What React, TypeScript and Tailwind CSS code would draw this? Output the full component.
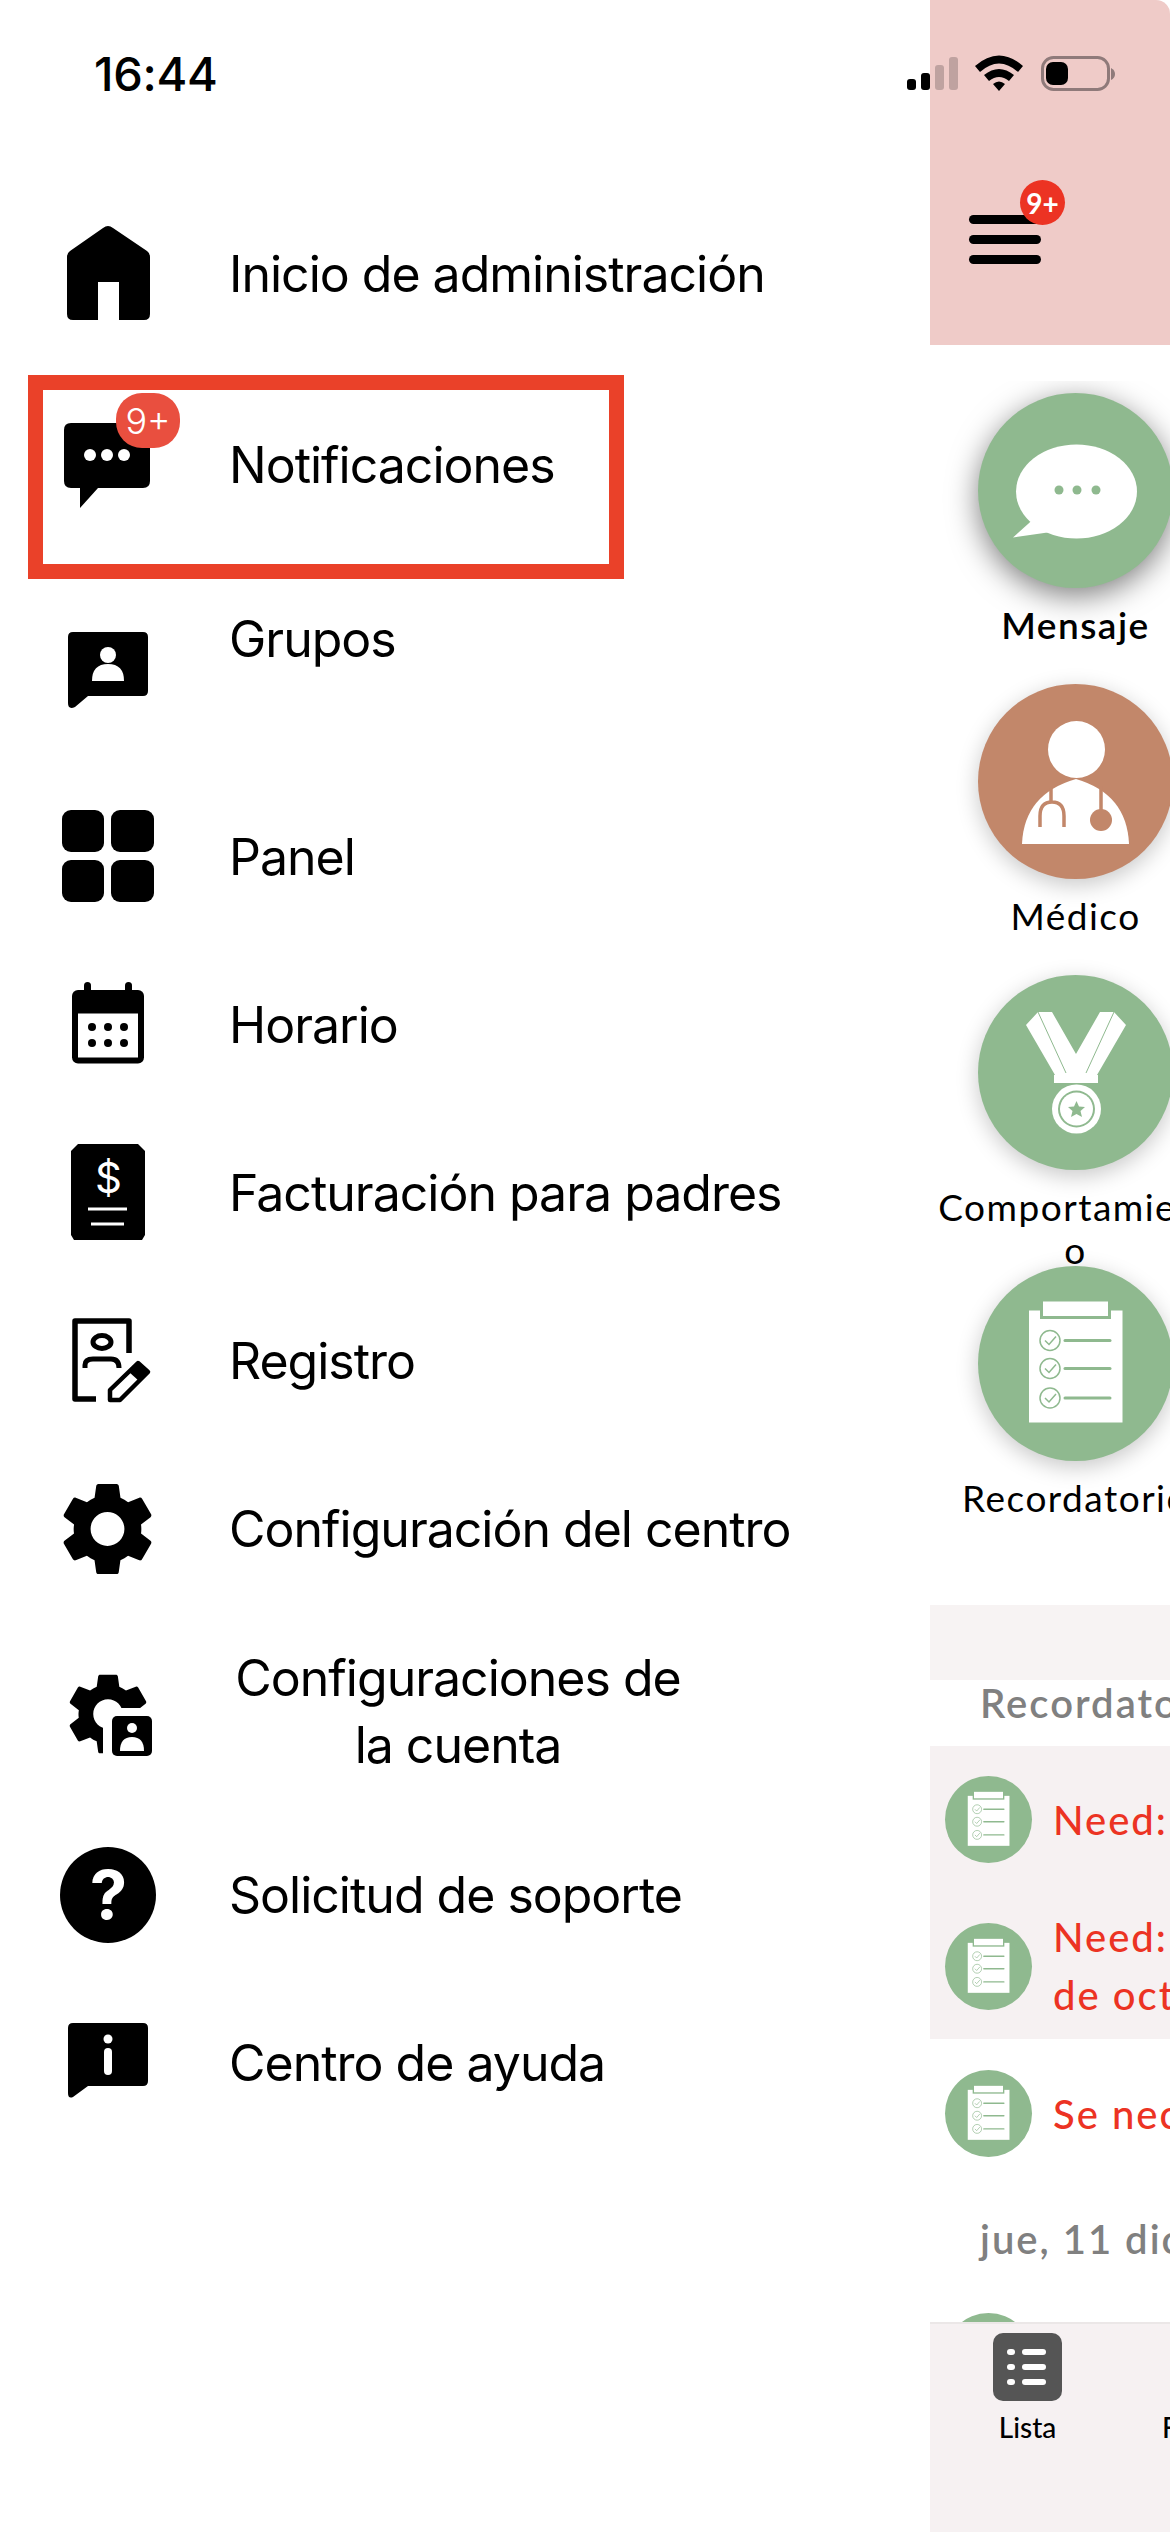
import type { ReactNode } from "react";

const GEAR =
  "M19.14 12.94c.04-.3.06-.61.06-.94 0-.32-.02-.64-.07-.94l2.03-1.58c.18-.14.23-.41.12-.61l-1.92-3.32c-.12-.22-.37-.29-.59-.22l-2.39.96c-.5-.38-1.03-.7-1.62-.94l-.36-2.54c-.04-.24-.24-.41-.48-.41h-3.84c-.24 0-.43.17-.47.41l-.36 2.54c-.59.24-1.13.57-1.62.94l-2.39-.96c-.22-.08-.47 0-.59.22L2.74 8.87c-.12.21-.08.47.12.61l2.03 1.58c-.05.3-.09.63-.09.94s.02.64.07.94l-2.03 1.58c-.18.14-.23.41-.12.61l1.92 3.32c.12.22.37.29.59.22l2.39-.96c.5.38 1.03.7 1.62.94l.36 2.54c.05.24.24.41.48.41h3.84c.24 0 .44-.17.47-.41l.36-2.54c.59-.24 1.13-.56 1.62-.94l2.39.96c.22.08.47 0 .59-.22l1.92-3.32c.12-.22.07-.47-.12-.61l-2.01-1.58zM12 15.6c-1.98 0-3.6-1.62-3.6-3.6s1.62-3.6 3.6-3.6 3.6 1.62 3.6 3.6-1.62 3.6-3.6 3.6z";

const Icon = ({ children }: { children: ReactNode }) => (
  <svg viewBox="0 0 100 100" className="w-[100px] h-[100px] shrink-0 overflow-visible">
    {children}
  </svg>
);

const HomeIcon = () => (
  <Icon>
    <path d="M45 4Q50 0 55 4L89 27Q92 29 92 33V90Q92 96 86 96H61V58H40V96H15Q9 96 9 90V33Q9 29 12 27Z" />
  </Icon>
);

const ChatIcon = () => (
  <Icon>
    <path d="M13 8H85Q92 8 92 15V66Q92 73 85 73H40L22 93V73H13Q6 73 6 66V15Q6 8 13 8Z" />
    <circle cx="32" cy="40" r="6" fill="#fff" />
    <circle cx="49" cy="40" r="6" fill="#fff" />
    <circle cx="66" cy="40" r="6" fill="#fff" />
  </Icon>
);

const GroupIcon = () => (
  <Icon>
    <path d="M15 12H85Q90 12 90 17V71Q90 76 85 76H30L17 87Q10 90 10 83V17Q10 12 15 12Z" />
    <circle cx="50" cy="35" r="8" fill="#fff" />
    <path d="M34 61Q34 44 50 44Q66 44 66 61Z" fill="#fff" />
  </Icon>
);

const PanelIcon = () => (
  <Icon>
    <rect x="4" y="3" width="42" height="42" rx="9" />
    <rect x="53" y="3" width="43" height="42" rx="9" />
    <rect x="4" y="53" width="42" height="42" rx="9" />
    <rect x="53" y="53" width="43" height="42" rx="9" />
  </Icon>
);

const CalendarIcon = () => (
  <Icon>
    <rect x="26" y="7" width="7" height="14" rx="3.5" />
    <rect x="67" y="7" width="7" height="14" rx="3.5" />
    <rect x="14" y="15" width="72" height="73.5" rx="6" />
    <rect x="20" y="38.5" width="60" height="44" fill="#fff" />
    {[34, 50, 66].map((x) => (
      <g key={x}>
        <circle cx={x} cy="52" r="4" />
        <circle cx={x} cy="68" r="4" />
      </g>
    ))}
  </Icon>
);

const BillIcon = () => (
  <Icon>
    <path d="M20 1H80L87 8V92L84 97H16L13 92V8Z" />
    <text x="50" y="50" textAnchor="middle" fontSize="42" fill="#fff" fontFamily="Inter, sans-serif">
      $
    </text>
    <rect x="30" y="64.5" width="39" height="3" fill="#fff" />
    <rect x="33" y="79.5" width="33" height="3" fill="#fff" />
  </Icon>
);

const RegisterIcon = () => (
  <Icon>
    <g fill="none" stroke="#000" strokeWidth="5.5" strokeLinejoin="round">
      <path d="M71 42V10H17V88H38" />
      <ellipse cx="44" cy="31" rx="9" ry="6.5" strokeWidth="5" />
      <path d="M27 57V54Q27 48 35 48H53Q61 48 61 57" strokeWidth="5" />
      <path d="M52 89V79L80 52L90 61L62 89Z" strokeWidth="4.5" />
    </g>
    <path d="M71 61L80 52L90 61L81 70Z" />
  </Icon>
);

const GearIcon = () => (
  <Icon>
    <path transform="translate(49.5 50) scale(4.7) translate(-12 -12)" d={GEAR} />
  </Icon>
);

const AccountGearIcon = () => (
  <Icon>
    <path transform="translate(50 52) scale(4.1) translate(-12 -12)" d={GEAR} />
    <rect x="45" y="46" width="55" height="55" fill="#fff" />
    <rect x="54" y="54" width="40" height="40" rx="5" />
    <circle cx="74" cy="66" r="5" fill="#fff" />
    <path d="M62 89Q62 75 74 75Q86 75 86 89Z" fill="#fff" />
  </Icon>
);

const HelpIcon = () => (
  <Icon>
    <circle cx="50" cy="50" r="48" />
    <text x="50" y="74" textAnchor="middle" fontSize="67" fontWeight="700" fill="#fff" fontFamily="Inter, sans-serif">
      ?
    </text>
  </Icon>
);

const InfoIcon = () => (
  <Icon>
    <path d="M15 10H85Q90 10 90 15V68Q90 73 85 73H30L15 84Q10 86 10 80V15Q10 10 15 10Z" />
    <circle cx="50" cy="26" r="4.5" fill="#fff" />
    <rect x="46" y="35" width="8" height="27" rx="4" fill="#fff" />
  </Icon>
);

const menu = [
  { label: "Inicio de administración", icon: <HomeIcon />, height: "h-[192px]" },
  { label: "Notificaciones", icon: <ChatIcon />, height: "h-[190px]", badge: true },
];

const menuBottom = [
  { label: "Panel", icon: <PanelIcon /> },
  { label: "Horario", icon: <CalendarIcon /> },
  { label: "Facturación para padres", icon: <BillIcon /> },
  { label: "Registro", icon: <RegisterIcon /> },
  { label: "Configuración del centro", icon: <GearIcon /> },
];

const SideMenu = () => (
  <nav className="w-[930px] shrink-0 flex flex-col pt-[178px] pl-[58px] font-['Inter',sans-serif] text-[50px] leading-[60px] tracking-[-1px] text-black">
    {menu.map((item) => (
      <div key={item.label} className={`relative flex items-center gap-[71px] ${item.height}`}>
        {item.icon}
        <span>{item.label}</span>
        {item.badge && (
          <span className="absolute left-[58px] top-[23px] flex h-[55px] w-[64px] items-center justify-center rounded-[26px] bg-[#e94f3f] text-[36px] font-light leading-none tracking-normal text-white">
            9+
          </span>
        )}
      </div>
    ))}
    <div className="flex h-[213px] items-start gap-[71px]">
      <div className="mt-[60px]">
        <GroupIcon />
      </div>
      <span className="mt-[49px]">Grupos</span>
    </div>
    {menuBottom.map((item) => (
      <div key={item.label} className="flex h-[168px] items-center gap-[71px]">
        {item.icon}
        <span>{item.label}</span>
      </div>
    ))}
    <div className="flex h-[198px] items-center">
      <AccountGearIcon />
      <span className="ml-[70px] w-[460px] whitespace-nowrap text-center leading-[67px]">
        Configuraciones de
        <br />
        la cuenta
      </span>
    </div>
    <div className="flex h-[168px] items-center gap-[71px]">
      <HelpIcon />
      <span>Solicitud de soporte</span>
    </div>
    <div className="flex h-[168px] items-center gap-[71px]">
      <InfoIcon />
      <span>Centro de ayuda</span>
    </div>
  </nav>
);

const StatusBar = () => (
  <div className="absolute inset-x-0 top-0 flex h-[120px] items-start justify-between pl-[94px] font-['Inter',sans-serif]">
    <span className="mt-[46px] text-[47px] font-medium leading-[56px] tracking-[-0.3px] text-black">16:44</span>
    <svg width="263" height="120" viewBox="907 0 263 120">
      <rect x="907" y="79" width="9" height="11" rx="3" />
      <rect x="921" y="73" width="9" height="17" rx="3" />
      <rect x="935" y="65" width="9" height="25" rx="3" fillOpacity="0.2" />
      <rect x="949" y="57" width="9" height="33" rx="3" fillOpacity="0.2" />
      <path d="M975 66Q999 45 1023 66L1018 72Q999 55 980 72Z" />
      <path d="M984 75Q999 63 1014 75L1009 81Q999 73 989 81Z" />
      <path d="M993 84Q999 79 1005 84L999 91Z" />
      <rect x="1042.5" y="57.5" width="66" height="32" rx="11" fill="none" stroke="#8f7a7a" strokeWidth="3" />
      <rect x="1046" y="62" width="22" height="23" rx="7" />
      <path d="M1111 68Q1115 70 1115 74Q1115 78 1111 80Z" fill="#8f7a7a" />
    </svg>
  </div>
);

const ClipboardArt = () => (
  <svg viewBox="0 0 195 195" className="h-full w-full">
    <rect x="51" y="44.5" width="93.5" height="112" fill="#fff" />
    <rect x="62" y="33" width="71" height="20" fill="#8fb98f" />
    <rect x="65" y="35.5" width="65" height="14.5" fill="#fff" />
    {[74.5, 102.5, 132].map((y) => (
      <g key={y} fill="none" stroke="#8fb98f">
        <circle cx="72" cy={y} r="10" strokeWidth="1.5" />
        <path d={`M67 ${y}L71 ${y + 4}L78 ${y - 4}`} strokeWidth="1.5" />
        <path d={`M87 ${y}H132`} strokeWidth="3" strokeLinecap="round" />
      </g>
    ))}
  </svg>
);

const BubbleArt = () => (
  <svg viewBox="0 0 195 195" className="h-full w-full">
    <ellipse cx="98.5" cy="98.5" rx="60.5" ry="47" fill="#fff" />
    <path d="M35 144.5L60 122L80 138Z" fill="#fff" />
    <circle cx="81" cy="97" r="4.5" fill="#8fb98f" />
    <circle cx="99" cy="97" r="4.5" fill="#8fb98f" />
    <circle cx="118" cy="97" r="4.5" fill="#8fb98f" />
  </svg>
);

const DoctorArt = () => (
  <svg viewBox="0 0 195 195" className="h-full w-full">
    <circle cx="98.5" cy="65.5" r="28.5" fill="#fff" />
    <path d="M44 160Q46 110 98 95Q149 110 151 160Z" fill="#fff" />
    <path d="M62 143V132Q62 118 74 118Q86 118 86 132V143M73 104V118M123 102V130" fill="none" stroke="#c2876a" strokeWidth="3.5" />
    <circle cx="123" cy="136" r="11" fill="#c2876a" />
  </svg>
);

const MedalArt = () => (
  <svg viewBox="0 0 195 195" className="h-full w-full">
    <path d="M48 50L60 37H74L98 79L122 37H136L148 50L119 100H77Z" fill="#fff" />
    <path d="M60 37L88 98M136 37L108 98" stroke="#8fb98f" strokeWidth="1" />
    <rect x="76" y="100" width="44" height="8" fill="#fff" />
    <circle cx="98.5" cy="134" r="24.5" fill="#fff" />
    <circle cx="98.5" cy="134" r="18.5" fill="#8fb98f" />
    <circle cx="98.5" cy="134" r="16.5" fill="#fff" />
    <circle cx="98.5" cy="134" r="14.5" fill="#fff" />
    <path d="M98.5 126L101 131.5L107 132L102.5 136L104 142L98.5 139L93 142L94.5 136L90 132L96 131.5Z" fill="#8fb98f" />
  </svg>
);

const tiles = [
  {
    label: "Mensaje",
    art: <BubbleArt />,
    circle: "bg-[#8fb98f] shadow-[0_8px_30px_rgba(0,0,0,0.5)]",
    text: "font-semibold",
  },
  {
    label: "Médico",
    art: <DoctorArt />,
    circle: "bg-[#c2876a] shadow-[0_6px_22px_rgba(0,0,0,0.22)]",
    text: "",
  },
  {
    label: (
      <>
        Comportamient
        <br />o
      </>
    ),
    art: <MedalArt />,
    circle: "bg-[#8fb98f] shadow-[0_6px_22px_rgba(0,0,0,0.22)]",
    text: "",
  },
  {
    label: "Recordatorio",
    art: <ClipboardArt />,
    circle: "bg-[#8fb98f] shadow-[0_6px_22px_rgba(0,0,0,0.22)]",
    text: "",
  },
];

const Avatar = () => (
  <div className="h-[87px] w-[87px] shrink-0 rounded-full bg-[#8fb98f]">
    <ClipboardArt />
  </div>
);

const Reminder = ({ children, className = "" }: { children: ReactNode; className?: string }) => (
  <div className={`flex w-[700px] items-center gap-[21px] pl-[15px] ${className}`}>
    <Avatar />
    <p className="whitespace-nowrap text-[40px] font-medium leading-[58px] tracking-[2px] text-[#ec3323]">
      {children}
    </p>
  </div>
);

const SidePeek = () => (
  <div className="relative flex h-[2532px] w-[240px] shrink-0 flex-col overflow-hidden font-['Lato',sans-serif]">
    <header className="h-[345px] shrink-0 rounded-tr-[14px] bg-[#efcbc8] pl-[39px] pt-[215px]">
      <div className="relative flex w-[72px] flex-col gap-[11px]">
        <span className="h-[9px] rounded-full bg-black" />
        <span className="h-[9px] rounded-full bg-black" />
        <span className="h-[9px] rounded-full bg-black" />
        <span className="absolute left-[51px] top-[-35px] flex h-[45px] w-[45px] items-center justify-center rounded-full bg-[#ec3323] text-[28px] font-bold leading-none text-white">
          9+
        </span>
      </div>
    </header>
    <main className="mt-[36px] min-h-0 flex-1 overflow-hidden">
      <div className="ml-[7px] flex w-[277px] flex-col pt-[12px]">
        {tiles.map((tile, i) => (
          <div key={i} className="flex h-[291px] flex-col items-center text-center text-black">
            <div className={`h-[195px] w-[195px] shrink-0 rounded-full ${tile.circle}`}>{tile.art}</div>
            <span className={`mt-[15px] text-[37px] leading-[43px] tracking-[1.5px] ${tile.text}`}>{tile.label}</span>
          </div>
        ))}
      </div>
      <div className="mt-[48px] h-[75px] bg-[#f7f3f3]" />
      <h3 className="h-[66px] whitespace-nowrap pl-[50px] text-[40px] font-semibold leading-[46px] tracking-[2px] text-[#808080]">
        Recordatorio
      </h3>
      <div className="flex flex-col gap-[45px] bg-[#f6f1f2] pb-[15px] pt-[30px]">
        <Reminder>Need: pañales</Reminder>
        <Reminder>
          Need: ropa para el 12
          <br />
          de octubre
        </Reminder>
      </div>
      <div className="pt-[31px]">
        <Reminder>Se necesita toallitas</Reminder>
      </div>
      <h3 className="mt-[52px] h-[60px] whitespace-nowrap pl-[50px] text-[40px] font-semibold leading-[60px] tracking-[2px] text-[#808080]">
        jue, 11 dic
      </h3>
      <div className="mt-[44px]">
        <Reminder>Need</Reminder>
      </div>
    </main>
    <footer className="flex h-[210px] w-[400px] shrink-0 border-t-2 border-[#ebe7e7] bg-[#f6f1f2] pt-[9px] text-black">
      <div className="ml-[63px] flex w-[69px] flex-col items-center">
        <div className="flex h-[68px] w-[69px] flex-col justify-center gap-[9px] rounded-[10px] bg-[#555555] pl-[14px] pr-[16px]">
          {[0, 1, 2].map((n) => (
            <div key={n} className="flex items-center gap-[7px]">
              <span className="h-[6px] w-[8px] rounded-full bg-white" />
              <span className="h-[6px] flex-1 rounded-full bg-white" />
            </div>
          ))}
        </div>
        <span className="mt-[9px] text-[28px] font-medium leading-[34px]">Lista</span>
      </div>
      <span className="ml-[100px] mt-[77px] text-[28px] font-medium leading-[34px]">Fotos</span>
    </footer>
  </div>
);

export default function App() {
  return (
    <div className="relative flex h-[2532px] w-[1170px] overflow-hidden bg-white">
      <SideMenu />
      <SidePeek />
      <StatusBar />
      <div className="absolute left-[28px] top-[375px] h-[204px] w-[596px] border-[15px] border-[#ea4129]" />
    </div>
  );
}
